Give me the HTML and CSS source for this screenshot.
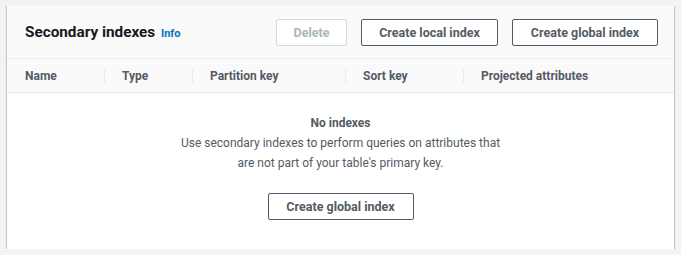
FILE: index.html
```html
<!DOCTYPE html>
<html lang="en">
<head>
    <meta charset="UTF-8">
    <title>Secondary indexes</title>
    <link rel="stylesheet" href="styles.css">
</head>
<body>
    <div class="panel">
        <div class="panel-header">
            <h2 class="panel-title">Secondary indexes <a class="info-link" href="#">Info</a></h2>
            <div class="actions">
                <button class="btn btn-delete" disabled>Delete</button>
                <button class="btn btn-local">Create local index</button>
                <button class="btn btn-global">Create global index</button>
            </div>
        </div>
        <div class="table-head">
            <div class="col col-name">Name</div>
            <div class="col col-type">Type</div>
            <div class="col col-part">Partition key</div>
            <div class="col col-sort">Sort key</div>
            <div class="col col-proj">Projected attributes</div>
        </div>
        <div class="empty">
            <div class="empty-title">No indexes</div>
            <p class="empty-text">Use secondary indexes to perform queries on attributes that<br>are not part of your table's primary key.</p>
            <button class="btn btn-global">Create global index</button>
        </div>
    </div>
</body>
</html>
```

FILE: styles.css
```css
body {
    font-family: Roboto, 'Liberation Sans', sans-serif;
    margin: 0;
    padding: 5px 7px 0 7px;
    background-color: #f2f3f3;
    color: #545b64;
}
.panel {
    background: white;
    box-shadow: 0 1px 1px 0 rgba(0,28,36,0.3), 1px 1px 1px 0 rgba(0,28,36,0.15), -1px 1px 1px 0 rgba(0,28,36,0.15);
}
.panel-header {
    display: flex;
    align-items: center;
    justify-content: space-between;
    height: 53px;
    padding: 0 16px 0 18px;
    background-color: #fafafa;
    border-bottom: 1px solid #eaeded;
}
.panel-title {
    margin: 0;
    font-size: 15.3px;
    font-weight: 700;
    color: #16191f;
}
.info-link {
    font-size: 11px;
    font-weight: 700;
    color: #0073bb;
    text-decoration: none;
    margin-left: 2px;
}
.actions {
    display: flex;
    gap: 14px;
    margin-top: 1px;
}
.btn {
    height: 27px;
    padding: 0;
    background: white;
    border: 1px solid #545b64;
    border-radius: 2px;
    color: #545b64;
    font-family: inherit;
    font-size: 12.5px;
    font-weight: 700;
    cursor: pointer;
}
.btn-delete {
    width: 71px;
    border-color: #d5dbdb;
    color: #aab7b8;
    cursor: default;
}
.btn-local { width: 137px; }
.btn-global { width: 146px; }
.table-head {
    display: flex;
    align-items: center;
    height: 33px;
    background-color: #fafafa;
    border-bottom: 1px solid #eaeded;
    font-size: 12px;
    font-weight: 700;
}
.col {
    padding-left: 17px;
    border-left: 1px solid #eaeded;
    line-height: 16px;
}
.col-name { width: 79px; border-left: none; padding-left: 18px; }
.col-type { width: 70px; }
.col-part { width: 135px; }
.col-sort { width: 100px; }
.col-proj { flex: 1; }
.empty {
    display: flex;
    flex-direction: column;
    align-items: center;
    text-align: center;
    height: 156px;
    padding-top: 21px;
    box-sizing: border-box;
    font-size: 12px;
}
.empty-title {
    font-weight: 700;
    line-height: 19px;
}
.empty-text {
    margin: 0 0 20px 0;
    line-height: 20px;
}
```
